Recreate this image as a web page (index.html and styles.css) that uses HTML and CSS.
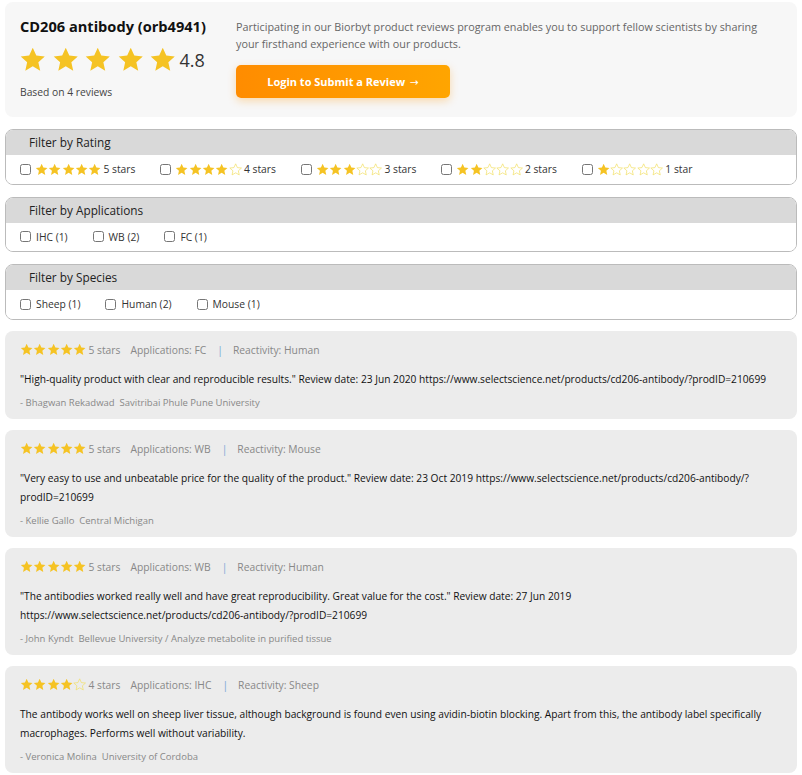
FILE: index.html
```html
<!DOCTYPE html>
<html lang="en">
<head>
  <meta charset="UTF-8" />
  <title>CD206 antibody (orb4941) - Reviews</title>
  <link rel="stylesheet" href="styles.css">
</head>
<body>
  <svg class="defs" width="0" height="0">
    <symbol id="star" viewBox="0 0 24 24">
      <polygon points="12,1.5 15.1,8.3 22.5,9.1 16.9,14.1 18.5,21.5 12,17.7 5.5,21.5 7.1,14.1 1.5,9.1 8.9,8.3" />
    </symbol>
  </svg>

  <div class="summary">
    <div class="summary-left">
      <h1>CD206 antibody (orb4941)</h1>
      <div class="big-rating">
        <span class="stars big">
          <svg class="on"><use href="#star"/></svg>
          <svg class="on"><use href="#star"/></svg>
          <svg class="on"><use href="#star"/></svg>
          <svg class="on"><use href="#star"/></svg>
          <svg class="on"><use href="#star"/></svg>
        </span>
        <span class="score">4.8</span>
      </div>
      <div class="based">Based on 4 reviews</div>
    </div>
    <div class="summary-right">
      <p>Participating in our Biorbyt product reviews program enables you to support fellow scientists by sharing your firsthand experience with our products.</p>
      <button class="submit-btn">Login to Submit a Review <span class="arrow">&rarr;</span></button>
    </div>
  </div>

  <div class="filter">
    <div class="filter-head">Filter by Rating</div>
    <div class="filter-body" id="rating-filter"></div>
  </div>

  <div class="filter">
    <div class="filter-head">Filter by Applications</div>
    <div class="filter-body">
      <label><input type="checkbox" /> IHC (1)</label>
      <label><input type="checkbox" /> WB (2)</label>
      <label><input type="checkbox" /> FC (1)</label>
    </div>
  </div>

  <div class="filter">
    <div class="filter-head">Filter by Species</div>
    <div class="filter-body">
      <label><input type="checkbox" /> Sheep (1)</label>
      <label><input type="checkbox" /> Human (2)</label>
      <label><input type="checkbox" /> Mouse (1)</label>
    </div>
  </div>

  <div id="reviews"></div>

  <script>
    const reviews = [
      {
        rating: 5, app: 'FC', species: 'Human',
        text: '"High-quality product with clear and reproducible results." Review date: 23 Jun 2020 https://www.selectscience.net/products/cd206-antibody/?prodID=210699',
        author: 'Bhagwan Rekadwad', org: 'Savitribai Phule Pune University'
      },
      {
        rating: 5, app: 'WB', species: 'Mouse',
        text: '"Very easy to use and unbeatable price for the quality of the product." Review date: 23 Oct 2019 https://www.selectscience.net/products/cd206-antibody/?prodID=210699',
        author: 'Kellie Gallo', org: 'Central Michigan'
      },
      {
        rating: 5, app: 'WB', species: 'Human',
        text: '"The antibodies worked really well and have great reproducibility. Great value for the cost." Review date: 27 Jun 2019 https://www.selectscience.net/products/cd206-antibody/?prodID=210699',
        author: 'John Kyndt', org: 'Bellevue University / Analyze metabolite in purified tissue'
      },
      {
        rating: 4, app: 'IHC', species: 'Sheep',
        text: 'The antibody works well on sheep liver tissue, although background is found even using avidin-biotin blocking. Apart from this, the antibody label specifically macrophages. Performs well without variability.',
        author: 'Veronica Molina', org: 'University of Cordoba'
      }
    ];

    function starsHtml(n, cls) {
      let html = `<span class="stars ${cls}">`;
      for (let i = 0; i < 5; i++) {
        html += `<svg class="${i < n ? 'on' : 'off'}"><use href="#star"/></svg>`;
      }
      return html + '</span>';
    }

    const ratingFilter = document.getElementById('rating-filter');
    for (let r = 5; r >= 1; r--) {
      const label = document.createElement('label');
      label.innerHTML = `<input type="checkbox" /> ${starsHtml(r, 'small')}${r} star${r > 1 ? 's' : ''}`;
      ratingFilter.appendChild(label);
    }

    const list = document.getElementById('reviews');
    reviews.forEach(rv => {
      const card = document.createElement('div');
      card.className = 'review';
      card.innerHTML = `
        <div class="review-meta">
          ${starsHtml(rv.rating, 'small')}
          <span class="count">${rv.rating} stars</span>
          <span>Applications: ${rv.app}</span>
          <span class="sep">|</span>
          <span>Reactivity: ${rv.species}</span>
        </div>
        <p class="review-text">${rv.text}</p>
        <div class="review-author">- ${rv.author}&nbsp;&nbsp;${rv.org}</div>`;
      list.appendChild(card);
    });
  </script>
</body>
</html>
```

FILE: styles.css
```css
* {
  box-sizing: border-box;
  margin: 0;
  padding: 0;
}

body {
  font-family: 'Open Sans', 'Noto Sans', sans-serif;
  color: #222;
  background: #fff;
  padding: 2px 5px 4px;
}

.defs {
  position: absolute;
  top: 0;
  left: 0;
}

/* star icons */
.stars {
  display: inline-flex;
  align-items: center;
}

.stars svg {
  display: block;
}

.stars .on {
  fill: #f5c324;
}

.stars .off {
  fill: none;
  stroke: #f3e067;
  stroke-width: 1.3;
}

.stars.big {
  gap: 5px;
  margin-left: -1px;
}

.stars.big svg {
  width: 27.5px;
  height: 27.5px;
}

.stars.small {
  gap: 0;
  margin-right: 2px;
}

.stars.small svg {
  width: 13.3px;
  height: 13.3px;
}

/* summary box */
.summary {
  background: #f7f7f7;
  border-radius: 8px;
  padding: 13px 16px 14px 15px;
  display: flex;
  gap: 16px;
  height: 115px;
}

.summary-left {
  width: 200px;
  flex-shrink: 0;
}

h1 {
  font-size: 14.6px;
  font-weight: 700;
  color: #111;
  line-height: 22px;
}

.big-rating {
  display: flex;
  align-items: center;
  gap: 3px;
  margin-top: 9px;
}

.score {
  font-size: 18px;
  color: #333;
}

.based {
  font-size: 10.3px;
  color: #444;
  margin-top: 11px;
}

.summary-right {
  padding-top: 3px;
}

.summary-right p {
  font-size: 10.8px;
  line-height: 17px;
  color: #666;
}

.submit-btn {
  margin-top: 13px;
  width: 214px;
  height: 33px;
  border: none;
  border-radius: 5px;
  background: linear-gradient(to right, #ff8c00, #ffa500);
  color: #fff;
  font-family: inherit;
  font-size: 11px;
  font-weight: 700;
  box-shadow: 0 3px 8px rgba(255, 150, 0, 0.3);
  cursor: pointer;
}

.submit-btn .arrow {
  font-family: 'DejaVu Sans', sans-serif;
  font-weight: 400;
  font-size: 10.5px;
  margin-left: 2px;
}

/* filters */
.filter {
  margin-top: 12px;
  border: 1px solid #bbb;
  border-radius: 8px;
  overflow: hidden;
}

.filter-head {
  background: #d9d9d9;
  font-size: 11.8px;
  color: #222;
  height: 25px;
  line-height: 25px;
  padding-left: 23px;
}

.filter-body {
  background: #fff;
  display: flex;
  align-items: center;
  height: 28.6px;
  padding-left: 14px;
  font-size: 10.3px;
  color: #333;
}

.filter-body label {
  display: inline-flex;
  align-items: center;
  margin-right: 25px;
}

.filter-body input {
  width: 11px;
  height: 11px;
  margin: 0 5px 0 0;
}

#rating-filter input {
  margin-right: 4px;
}

/* reviews */
.review {
  margin-top: 11px;
  background: #ececec;
  border-radius: 8px;
  padding: 11px 15px 8px;
}

.review-meta {
  display: flex;
  align-items: center;
  font-size: 10.3px;
  color: #888;
  height: 16px;
}

.review-meta .count {
  margin-right: 10px;
}

.review-meta .sep {
  color: #7aa7d6;
  margin: 0 10px 0 11px;
}

.review-text {
  margin-top: 12px;
  font-size: 10.2px;
  line-height: 19px;
  color: #111;
}

.review-author {
  margin-top: 6px;
  font-size: 9.5px;
  color: #888;
  line-height: 16px;
}
```
